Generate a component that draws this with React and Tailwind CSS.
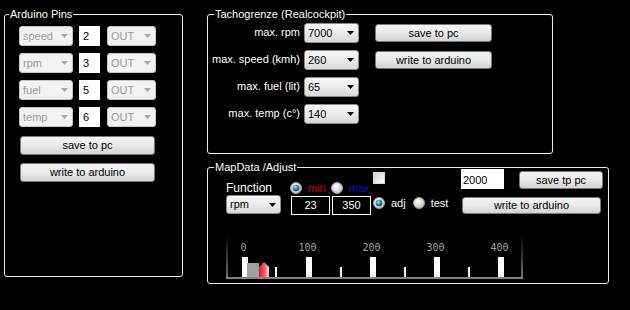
import React from "react";

const sans = "font-['Liberation_Sans',Arial,sans-serif]";

function Combo({ value, className, disabled }) {
  return (
    <div
      className={`${className} flex items-center justify-between rounded-[3px] border pl-[3px] pr-[4px] ${
        disabled
          ? "border-[#c6c6c6] bg-[#f2f2f2] text-[#9a9a9a]"
          : "border-[#8c8c8c] bg-linear-to-b from-[#f7f7f7] via-[#ebebeb] to-[#d8d8d8] text-black"
      }`}
    >
      <span>{value}</span>
      <svg width="7" height="4" viewBox="0 0 7 4">
        <path d="M0 0h7L3.5 4z" fill={disabled ? "#a9a9a9" : "#000"} />
      </svg>
    </div>
  );
}

function Btn({ children, className }) {
  return (
    <button
      className={`${className} flex items-center justify-center rounded-[3px] border border-[#7a7a7a] bg-linear-to-b from-[#f4f4f4] via-[#e9e9e9] to-[#d3d3d3] text-black`}
    >
      {children}
    </button>
  );
}

function Radio({ checked }) {
  return (
    <svg width="12" height="12" viewBox="0 0 12 12" className="shrink-0">
      <defs>
        <radialGradient id="rbody" cx="40%" cy="35%" r="70%">
          <stop offset="0%" stopColor="#ffffff" />
          <stop offset="100%" stopColor="#bdbdbd" />
        </radialGradient>
        <radialGradient id="rdot" cx="40%" cy="35%" r="65%">
          <stop offset="0%" stopColor="#9ae6ff" />
          <stop offset="55%" stopColor="#2a8cc4" />
          <stop offset="100%" stopColor="#0a3c62" />
        </radialGradient>
      </defs>
      <circle cx="6" cy="6" r="5.5" fill="url(#rbody)" stroke="#9c9c9c" />
      {checked && <circle cx="6" cy="6" r="3.3" fill="url(#rdot)" />}
    </svg>
  );
}

function Pin({ name, pin }) {
  return (
    <div className="flex items-center">
      <Combo value={name} disabled className="w-[54px] h-[20px]" />
      <div className="ml-[6px] w-[21px] h-[20px] bg-white text-black pl-[4px] pt-[2px]">{pin}</div>
      <Combo value="OUT" disabled className="ml-[7px] w-[49px] h-[20px]" />
    </div>
  );
}

function Chart() {
  const majors = [16, 80, 144, 208, 272];
  const minors = [49, 114, 178, 242];
  return (
    <svg width="297" height="45" viewBox="0 0 297 45">
      <defs>
        <linearGradient id="edge" x1="0" y1="0" x2="0" y2="1">
          <stop offset="0%" stopColor="#000" />
          <stop offset="100%" stopColor="#777" />
        </linearGradient>
        <linearGradient id="mark" x1="0" y1="0" x2="1" y2="0">
          <stop offset="0%" stopColor="#e0102a" />
          <stop offset="55%" stopColor="#ff5a6a" />
          <stop offset="100%" stopColor="#ffe2e4" />
        </linearGradient>
      </defs>
      <rect x="0" y="0" width="2" height="44" fill="url(#edge)" />
      <rect x="295" y="0" width="2" height="44" fill="url(#edge)" />
      <rect x="0" y="42" width="297" height="2" fill="#858585" />
      {majors.map((x, i) => (
        <g key={x}>
          <text
            x={x + 1.5}
            y="16"
            textAnchor="middle"
            fill="#a4a4a4"
            fontSize="10"
            fontFamily="'DejaVu Sans Mono', monospace"
          >
            {i * 100}
          </text>
          <rect x={x} y="22" width="6" height="20" fill="#fff" />
        </g>
      ))}
      {minors.map((x) => (
        <rect key={x} x={x} y="32" width="2" height="10" fill="#fff" />
      ))}
      <rect x="21" y="28" width="12" height="14" fill="#a0a0a0" />
      <polygon points="38,27 43,32 43,42 33,42 33,32" fill="url(#mark)" />
    </svg>
  );
}

export default function App() {
  return (
    <div className={`${sans} w-[630px] h-[310px] bg-black text-white text-[11px] flex gap-[24px] pl-[4px] pt-[7px] overflow-hidden`}>
      {/* Arduino Pins */}
      <fieldset className="w-[179px] h-[270px] shrink-0 rounded-[3px] border border-[#ececec]">
        <legend className="ml-[4px] px-[1px] leading-[14px]">Arduino Pins</legend>
        <div className="pl-[14px] pt-[5px]">
          <div className="flex flex-col gap-[7px]">
            <Pin name="speed" pin="2" />
            <Pin name="rpm" pin="3" />
            <Pin name="fuel" pin="5" />
            <Pin name="temp" pin="6" />
          </div>
          <Btn className="ml-[1px] mt-[9px] w-[135px] h-[19px]">save to pc</Btn>
          <Btn className="ml-[1px] mt-[8px] w-[135px] h-[19px]">write to arduino</Btn>
        </div>
      </fieldset>

      <div className="flex flex-col gap-[6px]">
        {/* Tachogrenze */}
        <fieldset className="w-[346px] h-[147px] shrink-0 rounded-[3px] border border-[#ececec]">
          <legend className="ml-[6px] px-[1px] leading-[14px]">Tachogrenze (Realcockpit)</legend>
          <div className="flex items-start pt-[2px]">
            <div className="grid grid-cols-[92px_55px] gap-x-[4px] gap-y-[7px] items-center">
              <span className="text-right -mt-[2px]">max. rpm</span>
              <Combo value="7000" className="h-[20px]" />
              <span className="text-right -mt-[2px]">max. speed (kmh)</span>
              <Combo value="260" className="h-[20px]" />
              <span className="text-right -mt-[2px]">max. fuel (lit)</span>
              <Combo value="65" className="h-[20px]" />
              <span className="text-right -mt-[2px]">max. temp (c°)</span>
              <Combo value="140" className="h-[20px]" />
            </div>
            <div className="ml-[16px] mt-[1px] flex flex-col gap-[9px]">
              <Btn className="w-[117px] h-[18px]">save to pc</Btn>
              <Btn className="w-[117px] h-[18px]">write to arduino</Btn>
            </div>
          </div>
        </fieldset>

        {/* MapData */}
        <fieldset className="w-[402px] h-[124px] shrink-0 rounded-[3px] border border-[#ececec]">
          <legend className="ml-[6px] px-[1px] leading-[14px]">MapData /Adjust</legend>
          <div className="-mt-[5px] pl-[18px]">
            <div className="flex items-start">
              <div className="w-[55px] pt-[12px] flex flex-col">
                <span className="h-[14px] leading-[14px] text-[12px]">Function</span>
                <Combo value="rpm" className="h-[19px]" />
              </div>
              <div className="ml-[10px] w-[80px] pt-[12px] flex flex-col">
                <div className="h-[14px] flex items-center -ml-[1px]">
                  <Radio checked />
                  <span className="ml-[6px] text-[#d40000]">min</span>
                  <span className="ml-[5px]"><Radio /></span>
                  <span className="ml-[6px] text-[#1010c8]">max</span>
                </div>
                <div className="mt-[1px] flex gap-[2px]">
                  <div className="w-[39px] h-[19px] border border-white flex items-center justify-center">23</div>
                  <div className="w-[39px] h-[19px] border border-white flex items-center justify-center">350</div>
                </div>
              </div>
              <div className="w-[90px] flex flex-col">
                <div className="ml-[2px] mt-[3px] w-[12px] h-[12px] border border-[#d8d8d8] bg-linear-to-br from-[#d2d2d2] to-[#fbfbfb]" />
                <div className="ml-[2px] mt-[13px] h-[12px] flex items-center">
                  <Radio checked />
                  <span className="ml-[6px]">adj</span>
                  <span className="ml-[7px]"><Radio /></span>
                  <span className="ml-[6px]">test</span>
                </div>
              </div>
              <div className="flex flex-col">
                <div className="flex items-start">
                  <div className="w-[43px] h-[20px] bg-white text-black pl-[2px] pt-[3px]">2000</div>
                  <Btn className="ml-[15px] mt-[2px] w-[84px] h-[18px]">save tp pc</Btn>
                </div>
                <Btn className="ml-[1px] mt-[8px] w-[139px] h-[17px]">write to arduino</Btn>
              </div>
            </div>
            <div className="mt-[20px]">
              <Chart />
            </div>
          </div>
        </fieldset>
      </div>
    </div>
  );
}
